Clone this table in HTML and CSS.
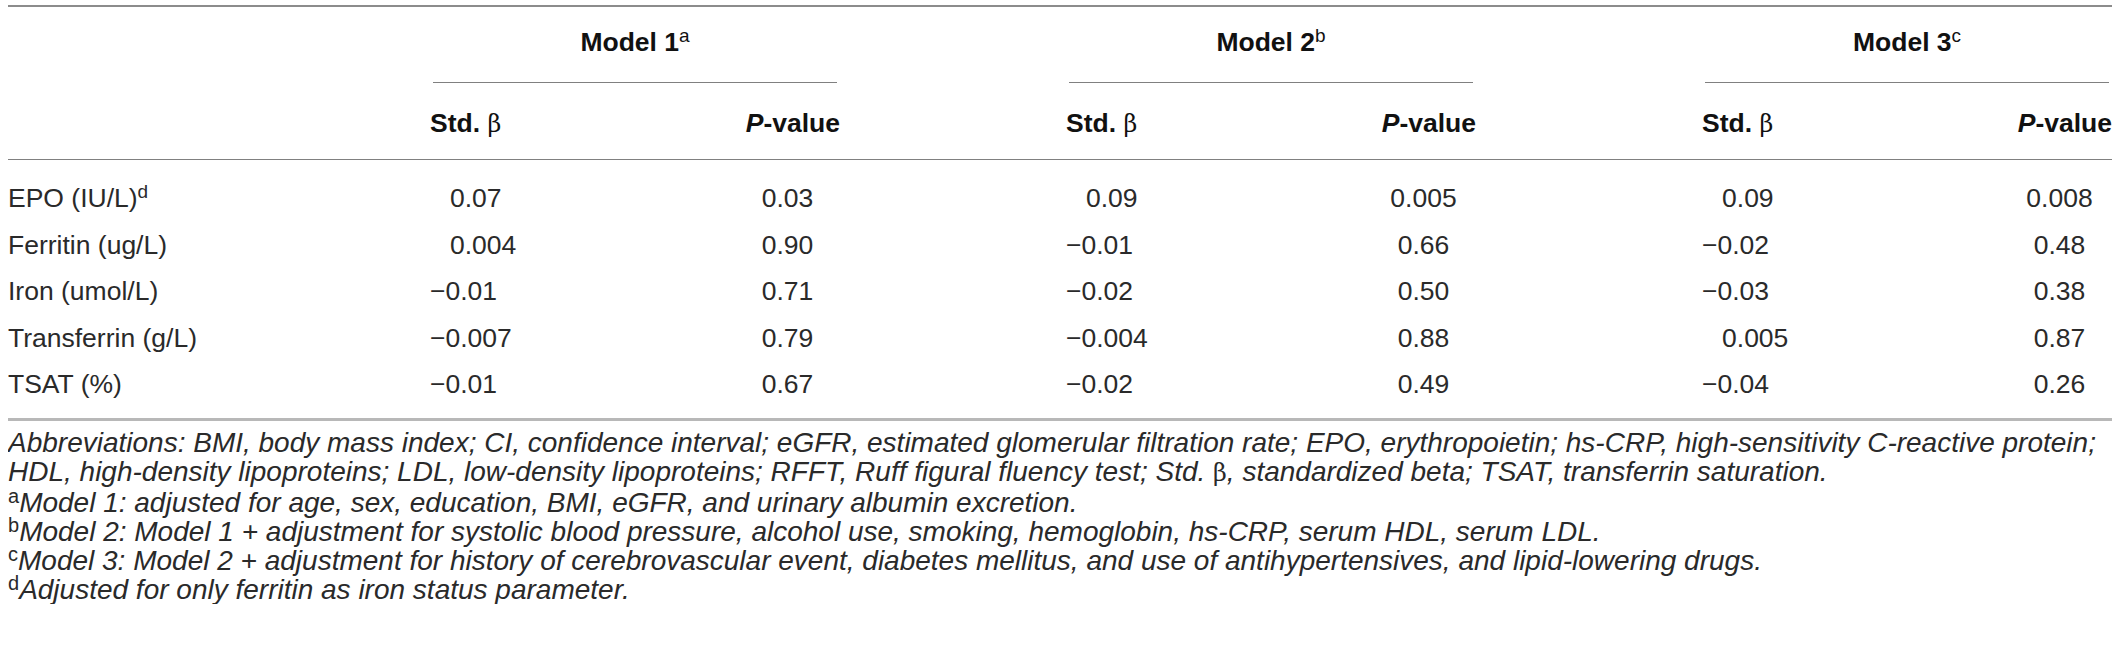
FILE: index.html
```html
<!DOCTYPE html>
<html lang="en">
<head>
  <meta charset="UTF-8">
  <meta name="viewport" content="width=device-width, initial-scale=1.0">
  <title>Iron status and standardized beta by model</title>
  <link rel="stylesheet" href="styles.css">
</head>
<body>
  <table class="data-table">
    <colgroup>
      <col class="col-label">
      <col class="col-std"><col class="col-p">
      <col class="col-gap">
      <col class="col-std"><col class="col-p">
      <col class="col-gap">
      <col class="col-std"><col class="col-p">
    </colgroup>
    <thead>
      <tr class="group-row">
        <th></th>
        <th colspan="2"><div class="group-title">Model 1<sup>a</sup></div></th>
        <th></th>
        <th colspan="2"><div class="group-title">Model 2<sup>b</sup></div></th>
        <th></th>
        <th colspan="2"><div class="group-title">Model 3<sup>c</sup></div></th>
      </tr>
      <tr class="sub-row">
        <th></th>
        <th>Std. <span class="beta">β</span></th>
        <th class="p-head"><i>P</i>-value</th>
        <th></th>
        <th>Std. <span class="beta">β</span></th>
        <th class="p-head"><i>P</i>-value</th>
        <th></th>
        <th>Std. <span class="beta">β</span></th>
        <th class="p-head"><i>P</i>-value</th>
      </tr>
    </thead>
    <tbody>
      <tr>
        <td>EPO (IU/L)<sup>d</sup></td>
        <td class="pos">0.07</td><td class="p">0.03</td><td></td>
        <td class="pos">0.09</td><td class="p">0.005</td><td></td>
        <td class="pos">0.09</td><td class="p">0.008</td>
      </tr>
      <tr>
        <td>Ferritin (ug/L)</td>
        <td class="pos">0.004</td><td class="p">0.90</td><td></td>
        <td>&minus;0.01</td><td class="p">0.66</td><td></td>
        <td>&minus;0.02</td><td class="p">0.48</td>
      </tr>
      <tr>
        <td>Iron (umol/L)</td>
        <td>&minus;0.01</td><td class="p">0.71</td><td></td>
        <td>&minus;0.02</td><td class="p">0.50</td><td></td>
        <td>&minus;0.03</td><td class="p">0.38</td>
      </tr>
      <tr>
        <td>Transferrin (g/L)</td>
        <td>&minus;0.007</td><td class="p">0.79</td><td></td>
        <td>&minus;0.004</td><td class="p">0.88</td><td></td>
        <td class="pos">0.005</td><td class="p">0.87</td>
      </tr>
      <tr>
        <td>TSAT (%)</td>
        <td>&minus;0.01</td><td class="p">0.67</td><td></td>
        <td>&minus;0.02</td><td class="p">0.49</td><td></td>
        <td>&minus;0.04</td><td class="p">0.26</td>
      </tr>
    </tbody>
  </table>

  <div class="footnotes">
    <p>Abbreviations: BMI, body mass index; CI, confidence interval; eGFR, estimated glomerular filtration rate; EPO, erythropoietin; hs-CRP, high-sensitivity C-reactive protein;<br>HDL, high-density lipoproteins; LDL, low-density lipoproteins; RFFT, Ruff figural fluency test; Std. <span class="beta">β</span>, standardized beta; TSAT, transferrin saturation.</p>
    <p><sup>a</sup>Model 1: adjusted for age, sex, education, BMI, eGFR, and urinary albumin excretion.</p>
    <p><sup>b</sup>Model 2: Model 1 + adjustment for systolic blood pressure, alcohol use, smoking, hemoglobin, hs-CRP, serum HDL, serum LDL.</p>
    <p><sup>c</sup>Model 3: Model 2 + adjustment for history of cerebrovascular event, diabetes mellitus, and use of antihypertensives, and lipid-lowering drugs.</p>
    <p><sup>d</sup>Adjusted for only ferritin as iron status parameter.</p>
  </div>
</body>
</html>
```

FILE: styles.css
```css
body {
  margin: 5px 8px 0;
  background: #fff;
  color: #2a2a2a;
  font-family: "Liberation Sans", Arial, sans-serif;
}

.data-table {
  width: 2104px;
  table-layout: fixed;
  border-collapse: separate;
  border-spacing: 0;
  font-size: 26.5px;
  line-height: 30px;
}

.col-label { width: 422px; }
.col-std { width: 205px; }
.col-p { width: 205px; }
.col-gap { width: 226px; }

.data-table th,
.data-table td {
  padding: 0;
  text-align: left;
  vertical-align: top;
}

.data-table sup {
  font-size: 19px;
  font-weight: normal;
  line-height: 0;
  vertical-align: 9px;
}

/* header */
.group-row th {
  border-top: 2px solid #8c8c8c;
  padding-top: 20px;
}

.group-title {
  margin: 0 3px;
  padding-bottom: 25px;
  border-bottom: 1px solid #808080;
  text-align: center;
  font-weight: bold;
  color: #111;
}

.sub-row th {
  padding: 25px 0 20px;
  border-bottom: 1px solid #808080;
  font-weight: bold;
  color: #111;
}

.sub-row .p-head {
  text-align: right;
}

.beta {
  font-family: "DejaVu Serif", "Liberation Serif", serif;
  font-weight: normal;
  font-style: normal;
  font-size: 0.9em;
}

/* body rows */
.data-table tbody td {
  padding-top: 8.25px;
  padding-bottom: 8.25px;
}

.data-table tbody tr:first-child td {
  padding-top: 23px;
}

.data-table tbody tr:last-child td {
  padding-bottom: 19px;
  border-bottom: 3px solid #b8b8b8;
}

.data-table td.pos {
  padding-left: 20px;
}

.data-table td.p {
  padding-left: 100px;
  text-align: center;
}

/* notes under the table */
.footnotes {
  margin-top: 7px;
  font-size: 28px;
  line-height: 29px;
  font-style: italic;
  white-space: nowrap;
}

.footnotes p {
  margin: 0;
}

.footnotes sup {
  font-style: normal;
  font-size: 20px;
  line-height: 0;
  vertical-align: 9px;
}

.footnotes .beta {
  font-size: 0.85em;
}
```
